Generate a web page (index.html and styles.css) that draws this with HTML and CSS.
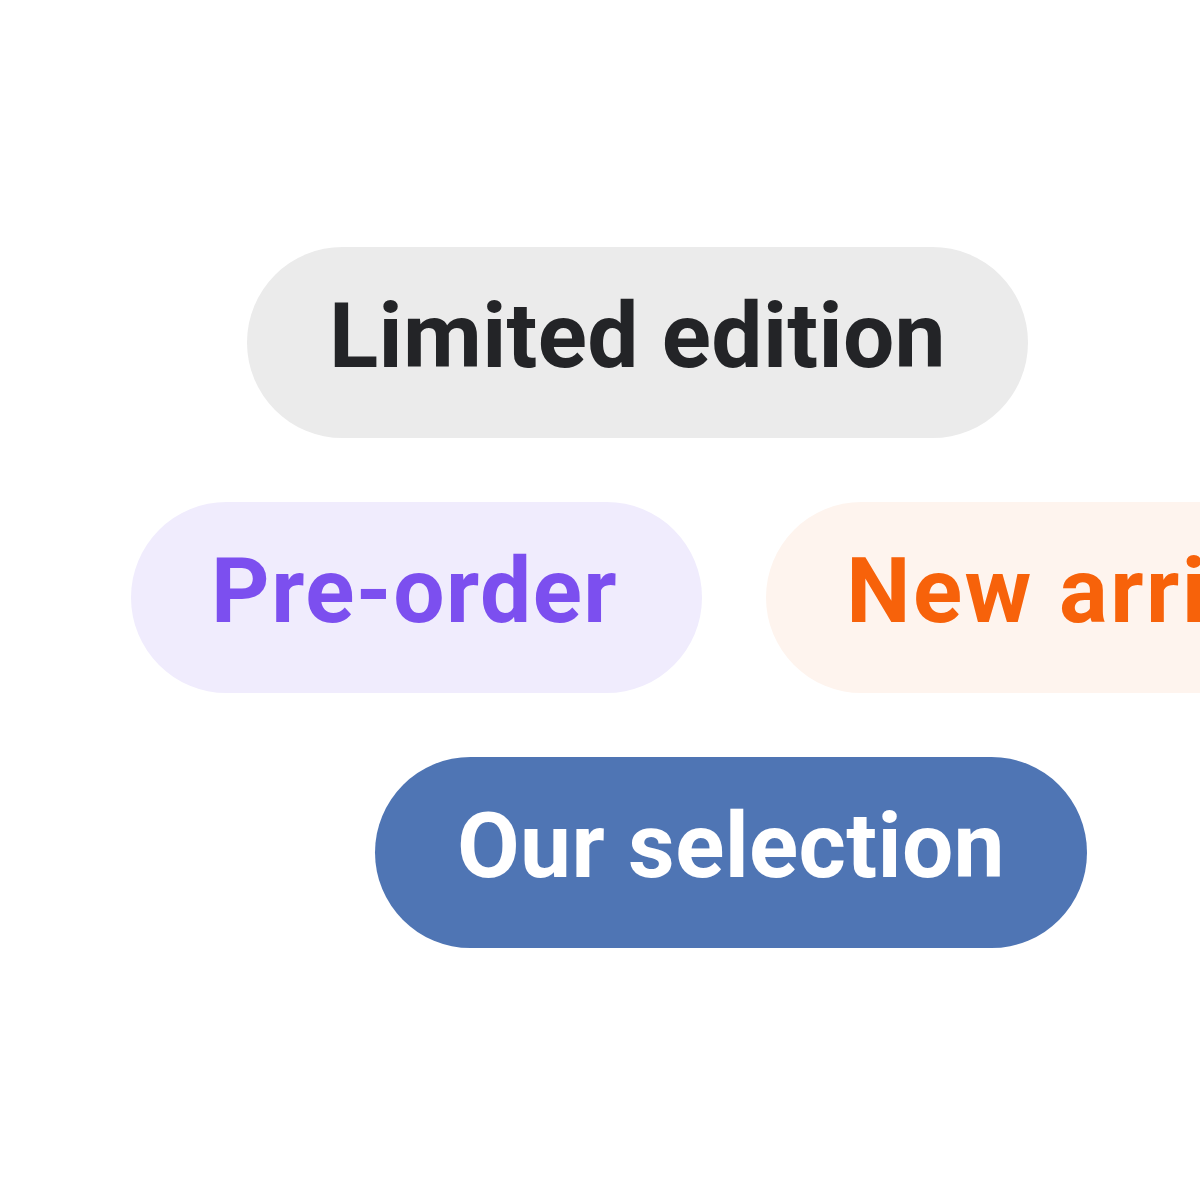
FILE: index.html
```html
<!DOCTYPE html>
<html>
<head>
<meta charset="utf-8">
<link rel="stylesheet" href="styles.css">
</head>
<body>
<main class="stage">
  <div class="row row-1">
    <span class="pill pill-grey">Limited edition</span>
  </div>
  <div class="row row-2">
    <span class="pill pill-purple">Pre-order</span>
    <span class="pill pill-orange">New arrival</span>
  </div>
  <div class="row row-3">
    <span class="pill pill-blue">Our selection</span>
  </div>
</main>
</body>
</html>
```
FILE: styles.css
```css
html, body {
  margin: 0;
  padding: 0;
  background: #ffffff;
}
body {
  width: 1200px;
  height: 1200px;
  overflow: hidden;
}
.stage {
  display: flex;
  flex-direction: column;
  gap: 64px;
  padding-top: 247px;
}
.row {
  display: flex;
  gap: 64px;
  white-space: nowrap;
}
.row-1 { padding-left: 247px; }
.row-2 { padding-left: 131px; }
.row-3 { padding-left: 375px; }
.pill {
  flex: none;
  box-sizing: border-box;
  display: flex;
  align-items: center;
  height: 191px;
  padding: 0 82px 12px 82px;
  border-radius: 96px;
  font-family: Roboto, "Liberation Sans", sans-serif;
  font-weight: 700;
  font-size: 91px;
  line-height: 1;
}
.pill-grey { background: #ebebeb; color: #232427; letter-spacing: 0.35px; }
.pill-purple { background: #f0ecfd; color: #7c4fef; letter-spacing: 1.5px; padding-left: 80px; padding-right: 84px; }
.pill-orange { background: #fef4ee; color: #f7620a; letter-spacing: 2.5px; padding-left: 80px; }
.pill-blue { background: #4f75b4; color: #ffffff; letter-spacing: 0.35px; }
```
